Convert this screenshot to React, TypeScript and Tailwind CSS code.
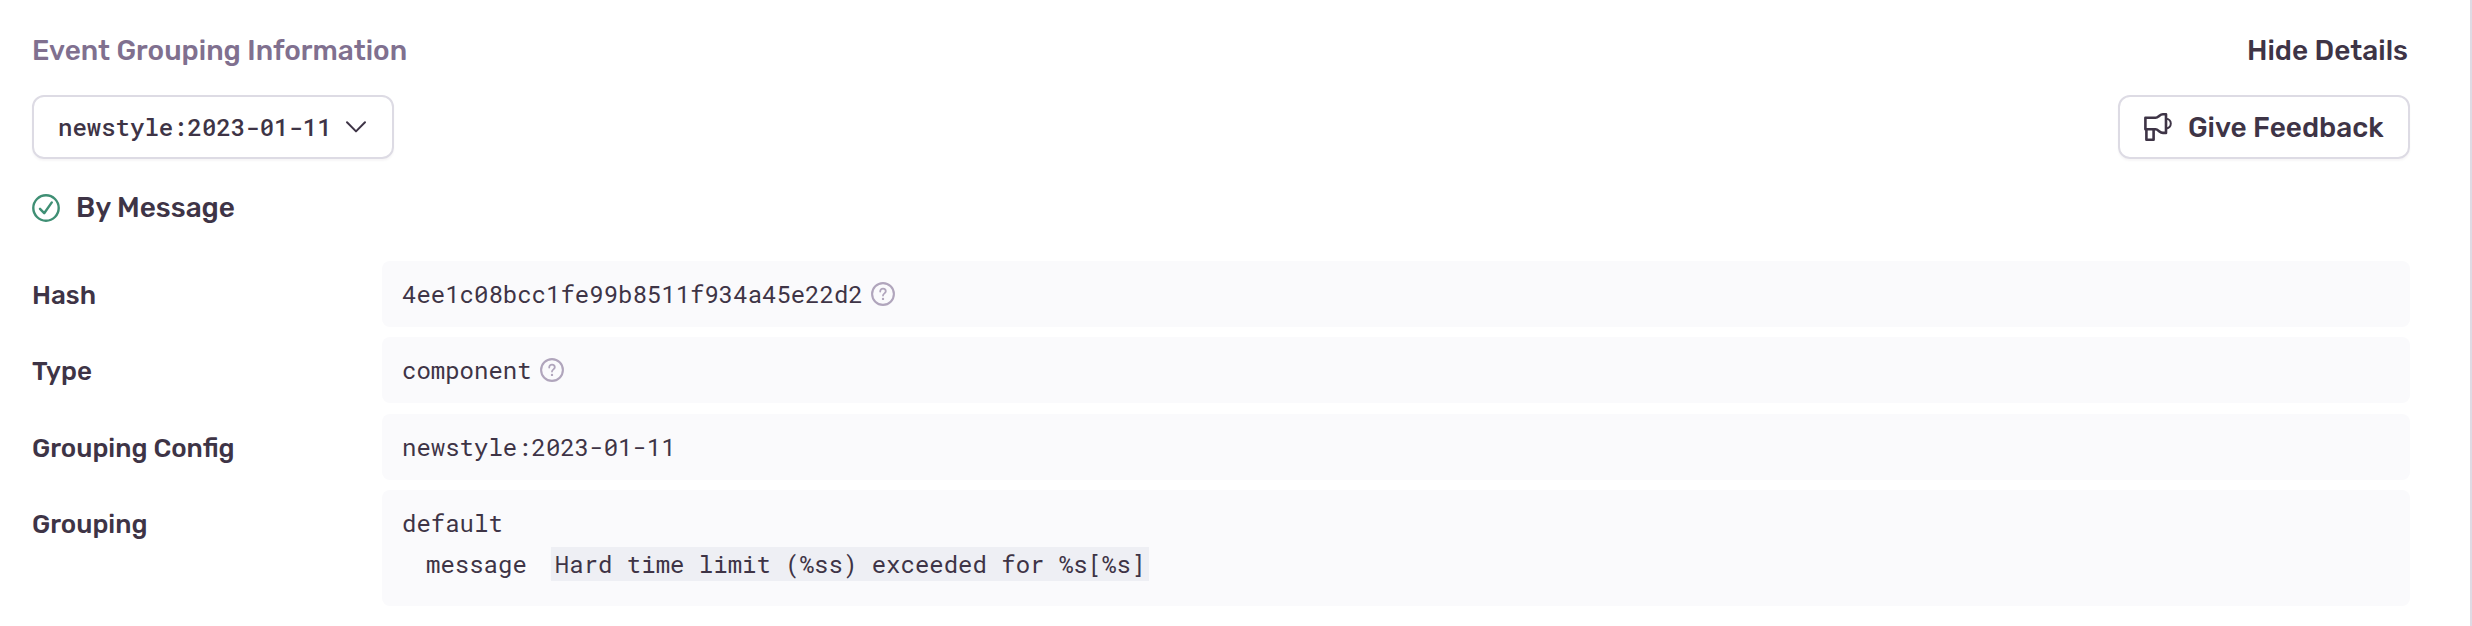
import type { ReactNode } from "react";

function CheckIcon() {
  return (
    <svg viewBox="0 0 28 28" className="size-7 shrink-0 text-[#3f8f74]" fill="none" stroke="currentColor" strokeWidth="2.4" strokeLinecap="round" strokeLinejoin="round">
      <circle cx="14" cy="14" r="12.7" />
      <path d="M8 14.8l4.2 4.4 7.6-10.8" />
    </svg>
  );
}

function ChevronIcon() {
  return (
    <svg viewBox="0 0 24 24" className="size-6 shrink-0" fill="none" stroke="currentColor" strokeWidth="2" strokeLinecap="round" strokeLinejoin="round">
      <path d="M3 7.2l9 9.2 9-9.2" />
    </svg>
  );
}

function MegaphoneIcon() {
  return (
    <svg viewBox="0 0 28 28" className="size-7 shrink-0" fill="none" stroke="currentColor" strokeWidth="2.6" strokeLinecap="round" strokeLinejoin="round">
      <path d="M1.400 4.800h10.200c1.200 0 2-.5 3.200-1.500 1.200-1 2.200-2 4.200-2h3v18.600h-3c-2 0-3-1-4.200-2s-2-1.600-3.200-1.600H1.400z" />
      <path d="M22 5.800c2.800 0 4.800 2.100 4.800 4.800s-2 4.800-4.800 4.800" strokeWidth="2" />
      <path d="M2.400 16.300v10.400h7.200V16.300" />
    </svg>
  );
}

function HelpIcon() {
  return (
    <svg viewBox="0 0 24 24" className="size-6 shrink-0 text-[#b0a5bc]" fill="none" stroke="currentColor" strokeWidth="2.1" strokeLinecap="round" strokeLinejoin="round">
      <circle cx="12" cy="12" r="10.9" />
      <path d="M9.200 9.500c0-1.700 1.200-2.900 2.800-2.900s2.800 1.200 2.800 2.700c0 2-2.800 2.100-2.800 4.300" strokeWidth="1.8" />
      <circle cx="12" cy="16.9" r="1.200" fill="currentColor" stroke="none" />
    </svg>
  );
}

function Row({ label, children }: { label: string; children: ReactNode }) {
  return (
    <div className="flex">
      <div className="w-[350px] shrink-0 pt-[15px] text-[26px] leading-[40px] font-medium">{label}</div>
      <div className="min-w-0 flex-1 rounded-lg bg-[#fafafc] px-5 py-[14px] font-['Roboto_Mono','DejaVu_Sans_Mono',monospace] text-[24px] leading-[38px]">
        {children}
      </div>
    </div>
  );
}

export default function App() {
  return (
    <div className="h-[626px] border-r-2 border-[#dddbe4] bg-white pt-[31px] pr-[60px] pl-8 font-[Rubik,Roboto,sans-serif] text-[28px] text-[#3e3446]">
      <div className="flex h-10 items-center justify-between font-medium">
        <h2 className="text-[#80708f]">Event Grouping Information</h2>
        <button className="mr-0.5">Hide Details</button>
      </div>

      <div className="mt-6 flex items-center justify-between">
        <button className="flex h-16 w-[362px] items-center gap-3 rounded-xl border-2 border-[#dddbe4] pl-6 font-['Roboto_Mono','DejaVu_Sans_Mono',monospace] text-[24px] font-medium shadow-[0_2px_2px_rgba(43,34,51,0.04)]">
          newstyle:2023-01-11
          <ChevronIcon />
        </button>
        <button className="flex h-16 w-[292px] items-center gap-4 rounded-xl border-2 border-[#dddbe4] pl-6 font-medium whitespace-nowrap shadow-[0_2px_2px_rgba(43,34,51,0.04)]">
          <MegaphoneIcon />
          <span className="pt-0.5">Give Feedback</span>
        </button>
      </div>

      <div className="mt-[29px] flex h-10 items-center gap-4 font-medium">
        <CheckIcon />
        By Message
      </div>

      <div className="mt-[33px] flex flex-col">
        <Row label="Hash">
          <div className="flex items-center gap-2">
            4ee1c08bcc1fe99b8511f934a45e22d2
            <HelpIcon />
          </div>
        </Row>
        <div className="mt-[10px]">
          <Row label="Type">
            <div className="flex items-center gap-2">
              component
              <HelpIcon />
            </div>
          </Row>
        </div>
        <div className="mt-[11px]">
          <Row label="Grouping Config">newstyle:2023-01-11</Row>
        </div>
        <div className="mt-[10px]">
          <Row label="Grouping">
            <div>default</div>
            <div className="mt-[3px] mb-[9px] flex items-center gap-6 pl-6">
              <span>message</span>
              <span className="bg-[#eeeff4] px-1 leading-[34px]">Hard time limit (%ss) exceeded for %s[%s]</span>
            </div>
          </Row>
        </div>
      </div>
    </div>
  );
}
